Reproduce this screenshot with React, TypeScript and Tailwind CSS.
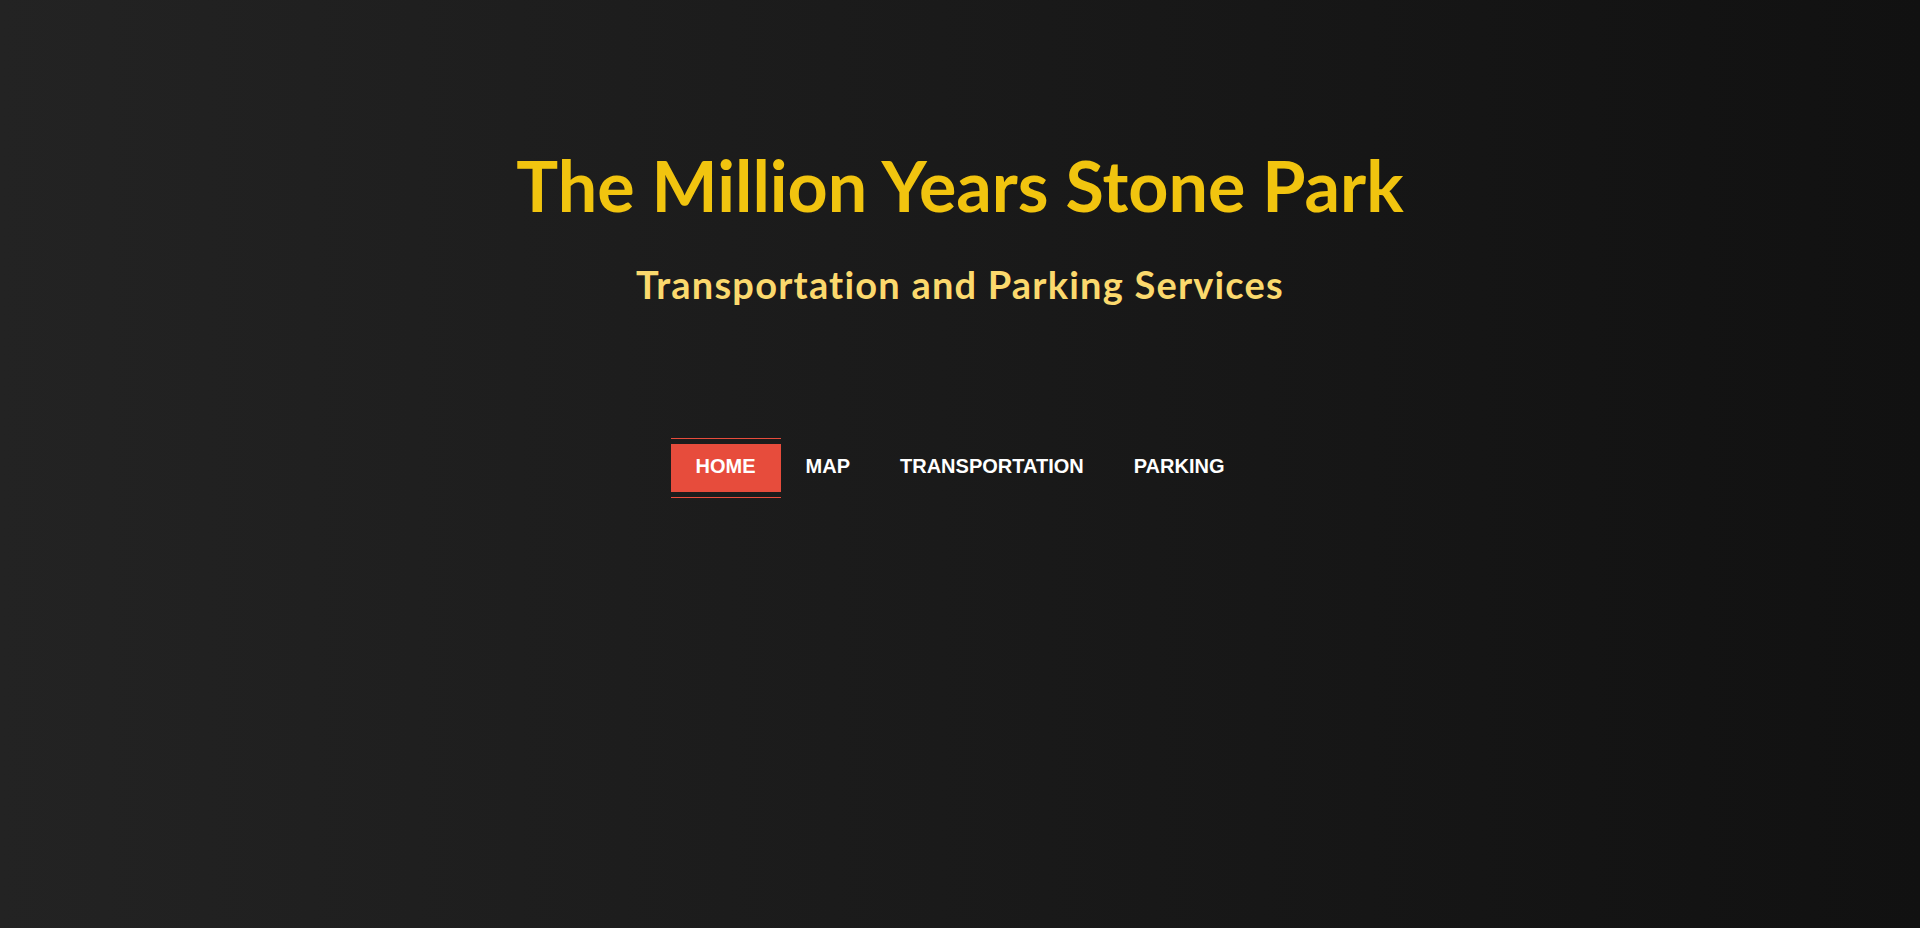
import React from 'react';

const links = ['HOME', 'MAP', 'TRANSPORTATION', 'PARKING'];

const App = () => {
  return (
    <div className="min-h-[928px] w-full bg-linear-to-r from-[#232323] to-[#111111]">
      <header className="text-center font-['Lato',sans-serif] font-bold">
        <h1 className="pt-[150px] text-[70px] leading-none text-[#f1c40f]">The Million Years Stone Park</h1>
        <h2 className="mt-[45px] text-[38px] leading-none tracking-[1.2px] text-[#fbd96d]">Transportation and Parking Services</h2>
      </header>

      <nav className="mt-[135px] flex justify-center">
        <ul className="flex items-start font-['Liberation_Sans',Arial,sans-serif] text-[20px] font-bold text-white">
          {links.map((l, i) => (
            <li key={l} className={i === 0 ? 'border-y border-[#e74c3c] py-[5px]' : 'py-[6px]'}>
              <a href="#" className={'block px-[25px] pt-[10px] pb-[14px] leading-6 ' + (i === 0 ? 'bg-[#e74c3c]' : '')}>
                {l}
              </a>
            </li>
          ))}
        </ul>
      </nav>
    </div>
  );
};

export default App;
